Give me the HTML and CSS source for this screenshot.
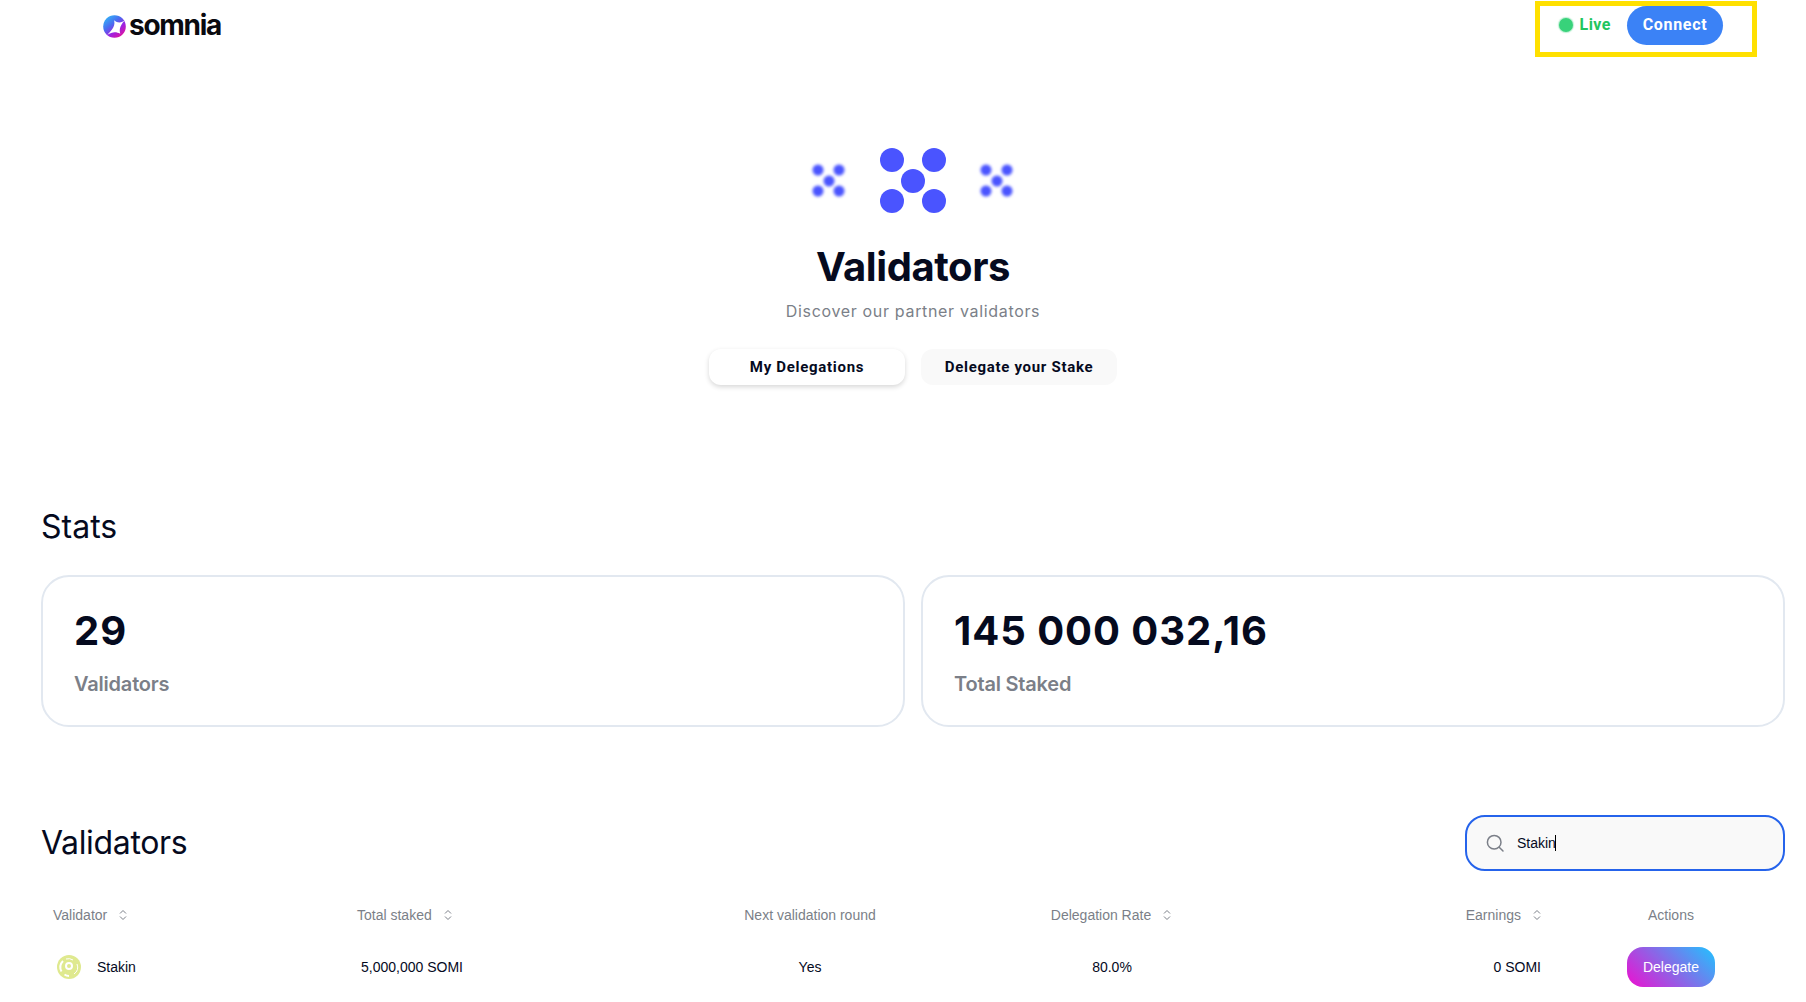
FILE: index.html
```html
<!DOCTYPE html>
<html lang="en">
<head>
<meta charset="utf-8">
<title>Validators</title>
<link rel="stylesheet" href="styles.css">
</head>
<body>
<header class="topbar">
  <a class="logo">
    <svg class="logo-mark" viewBox="0 0 24 24" width="23" height="23" aria-hidden="true">
      <defs>
        <linearGradient id="lg" x1="0.1" y1="0" x2="0.9" y2="1">
          <stop offset="0" stop-color="#2fc0f8"/>
          <stop offset="0.38" stop-color="#4a6cf0"/>
          <stop offset="0.65" stop-color="#a020e0"/>
          <stop offset="1" stop-color="#f0108c"/>
        </linearGradient>
      </defs>
      <circle cx="12" cy="12" r="11.8" fill="url(#lg)"/>
      <path d="M24 4.5 C19 8.5 16 9 11.5 5.5 C13 10.5 10.5 15 4.5 20.5 C9.5 17.5 13.5 17 18 19.5 C16.5 14.5 18.5 9.5 24 4.5Z" fill="#fff"/>
    </svg>
    <span class="logo-text">somnia</span>
  </a>
  <div class="status">
    <span class="live-dot"></span>
    <span class="live-text">Live</span>
    <button class="connect">Connect</button>
  </div>
  <div class="highlight"></div>
</header>

<section class="hero">
  <svg class="hero-art" viewBox="0 0 200 66" width="200" height="66" aria-hidden="true">
    <g class="dots-soft">
      <circle cx="5" cy="22" r="5.5"/><circle cx="26" cy="22" r="5.5"/><circle cx="16" cy="33" r="5.5"/><circle cx="5" cy="43" r="5.5"/><circle cx="26" cy="43" r="5.5"/>
    </g>
    <g class="dots">
      <circle cx="79" cy="12" r="12"/><circle cx="121" cy="12" r="12"/><circle cx="100" cy="33" r="12"/><circle cx="79" cy="53" r="12"/><circle cx="121" cy="53" r="12"/>
    </g>
    <g class="dots-soft">
      <circle cx="173" cy="22" r="5.5"/><circle cx="194" cy="22" r="5.5"/><circle cx="184" cy="33" r="5.5"/><circle cx="173" cy="43" r="5.5"/><circle cx="194" cy="43" r="5.5"/>
    </g>
  </svg>
  <h1 class="hero-title">Validators</h1>
  <p class="hero-sub">Discover our partner validators</p>
  <div class="tabs">
    <button class="tab tab-active">My Delegations</button>
    <button class="tab">Delegate your Stake</button>
  </div>
</section>

<main class="content">
  <h2 class="section-title stats-title">Stats</h2>
  <div class="cards">
    <div class="card">
      <div class="card-value">29</div>
      <div class="card-label">Validators</div>
    </div>
    <div class="card">
      <div class="card-value">145 000 032,16</div>
      <div class="card-label">Total Staked</div>
    </div>
  </div>

  <div class="table-head">
    <h2 class="section-title list-title">Validators</h2>
    <label class="search">
      <svg viewBox="0 0 20 20" width="20" height="20" aria-hidden="true" class="search-icon">
        <circle cx="9.2" cy="9.2" r="6.8"/>
        <path d="M14.2 14.2 L18 18"/>
      </svg>
      <span class="search-value">Stakin</span><span class="caret"></span>
    </label>
  </div>

  <table class="validators">
    <colgroup>
      <col class="c1"><col class="c2"><col class="c3"><col class="c4"><col class="c5"><col class="c6">
    </colgroup>
    <thead>
      <tr>
        <th class="left">Validator<svg class="sort" viewBox="0 0 8 12" width="8" height="12"><path d="M1 4.5 L4 1.5 L7 4.5 M1 7.5 L4 10.5 L7 7.5"/></svg></th>
        <th class="left">Total staked<svg class="sort" viewBox="0 0 8 12" width="8" height="12"><path d="M1 4.5 L4 1.5 L7 4.5 M1 7.5 L4 10.5 L7 7.5"/></svg></th>
        <th>Next validation round</th>
        <th class="rate">Delegation Rate<svg class="sort" viewBox="0 0 8 12" width="8" height="12"><path d="M1 4.5 L4 1.5 L7 4.5 M1 7.5 L4 10.5 L7 7.5"/></svg></th>
        <th class="right">Earnings<svg class="sort" viewBox="0 0 8 12" width="8" height="12"><path d="M1 4.5 L4 1.5 L7 4.5 M1 7.5 L4 10.5 L7 7.5"/></svg></th>
        <th>Actions</th>
      </tr>
    </thead>
    <tbody>
      <tr>
        <td class="left">
          <span class="name">
            <svg viewBox="0 0 24 24" width="24" height="24" aria-hidden="true" class="avatar">
              <circle cx="12" cy="12" r="12" fill="#dfe98f"/>
              <path d="M4.5 16.5 A9 9 0 0 1 6 6" class="arc"/>
              <path d="M9 4 A8.5 8.5 0 0 1 16 5" class="arc thin"/>
              <path d="M20 9 A8.5 8.5 0 0 1 17 19" class="arc thin"/>
              <path d="M7.5 19.5 A9 9 0 0 0 12 21" class="arc"/>
              <circle cx="12" cy="11" r="3" class="arc"/>
            </svg>
            Stakin
          </span>
        </td>
        <td class="left stake">5,000,000 SOMI</td>
        <td>Yes</td>
        <td>80.0%</td>
        <td class="right">0 SOMI</td>
        <td><button class="delegate">Delegate</button></td>
      </tr>
    </tbody>
  </table>
</main>
</body>
</html>
```
FILE: styles.css
```css
* { box-sizing: border-box; }
html, body { margin: 0; padding: 0; height: 1002px; overflow: hidden; background: #fff; }
body { font-family: "Inter", "Liberation Sans", sans-serif; color: #050a1e; }
button { font: inherit; border: 0; cursor: pointer; }

.topbar {
  position: relative;
  display: flex;
  justify-content: space-between;
  align-items: flex-start;
  height: 51px;
  padding: 6px 83px 0 103px;
}
.logo { display: flex; align-items: center; gap: 3px; margin-top: 3px; }
.logo-mark { display: block; margin-top: 2px; }
.logo-text { font-size: 28px; font-weight: 700; letter-spacing: -1.3px; color: #0a0a0f; line-height: 32px; }
.status { display: flex; align-items: center; }
.live-dot { width: 14px; height: 14px; border-radius: 50%; background: #38d27a; box-shadow: 0 0 1px 1px rgba(56,210,122,0.35); margin: 0 6px 2px -1px; }
.live-text { font-family: "Roboto", sans-serif; font-size: 16px; font-weight: 700; color: #22c55e; letter-spacing: 0.5px; margin: 0 16px 2px 0; }
.connect {
  width: 96px; height: 39px; border-radius: 20px; background: #3b82f6; color: #fff; padding: 0 0 2px;
  font-family: "Roboto", sans-serif; font-size: 16px; font-weight: 700; letter-spacing: 0.7px;
}
.highlight { position: absolute; left: 1535px; top: 1px; width: 222px; height: 56px; border: 5px solid #ffe000; pointer-events: none; }

.hero { display: flex; flex-direction: column; align-items: center; padding: 97px 0 0 20px; }
.hero-art { display: block; overflow: visible; }
.dots { fill: #4a54ff; }
.dots-soft { fill: #4a54ff; filter: blur(1.5px); }
.hero-title { margin: 29px 0 0; font-size: 40px; line-height: 48px; font-weight: 700; letter-spacing: -0.43px; color: #050a1e; }
.hero-sub { margin: 8px 0 0; font-size: 16px; line-height: 24px; color: #7b7f88; letter-spacing: 0.67px; }
.tabs { display: flex; gap: 16px; margin-top: 26px; }
.tab {
  width: 196px; height: 36px; border-radius: 12px; background: #f9f9f9; color: #050a1e;
  font-family: "Roboto", sans-serif; font-size: 15px; font-weight: 700; letter-spacing: 0.7px;
}
.tab-active { background: #fff; box-shadow: 0 2px 5px rgba(0,0,0,0.16); }

.content { padding: 122px 21px 0 41px; }
.section-title { margin: 0; font-size: 32px; line-height: 40px; font-weight: 400; color: #050a1e; }
.stats-title { margin-bottom: 28px; }
.list-title { letter-spacing: -0.35px; }
.cards { display: grid; grid-template-columns: 864px 864px; gap: 16px; }
.card { height: 152px; border: 2px solid #e2e8f0; border-radius: 28px; padding: 30px 31px 0; background: #fff; }
.card-value { font-size: 40px; line-height: 48px; font-weight: 700; color: #050a1e; letter-spacing: 0.95px; }
.card-label { margin-top: 17px; font-size: 20px; line-height: 24px; font-weight: 600; color: #7b7f88; letter-spacing: -0.2px; }

.table-head { display: flex; justify-content: space-between; align-items: center; margin-top: 88px; }
.search {
  display: flex; align-items: center; width: 320px; height: 56px; padding: 0 0 0 18px;
  border: 2px solid #2563eb; border-radius: 20px; background: #f9f9f9;
}
.search-icon { fill: none; stroke: #7b7f88; stroke-width: 1.5; stroke-linecap: round; margin-right: 12px; }
.search-value { font-family: "Liberation Sans", sans-serif; font-size: 14px; color: #050a1e; }
.caret { width: 1px; height: 16px; background: #000; margin-left: -1px; }

.validators { width: 1745px; table-layout: fixed; border-collapse: collapse; margin-top: 22px; font-family: "Liberation Sans", sans-serif; font-size: 14px; }
.c1 { width: 304px; } .c2 { width: 345px; } .c3 { width: 240px; } .c4 { width: 364px; } .c5 { width: 262px; } .c6 { width: 230px; }
th, td { padding: 0; text-align: center; }
th { height: 44px; font-weight: 400; color: #7b7f88; }
td { height: 60px; color: #050a1e; }
th.left { text-align: left; padding-left: 12px; }
th.rate { padding-right: 2px; }
td.left { text-align: left; }
td.stake { padding-left: 16px; }
th.right, td.right { text-align: right; padding-right: 15px; }
.sort { display: inline-block; vertical-align: -1px; margin-left: 12px; fill: none; stroke: #7b7f88; stroke-width: 1; }
.name { display: flex; align-items: center; gap: 16px; padding-left: 16px; }
.avatar { display: block; }
.arc { fill: none; stroke: #fff; stroke-width: 2; }
.arc.thin { stroke-width: 1; }
.delegate {
  display: block; margin: 0 auto; width: 88px; height: 40px; border-radius: 16px;
  background: linear-gradient(45deg, #ee0fd0 0%, #1fc4ff 100%);
  color: #fff; font-family: "Liberation Sans", sans-serif; font-size: 14px;
}
```
